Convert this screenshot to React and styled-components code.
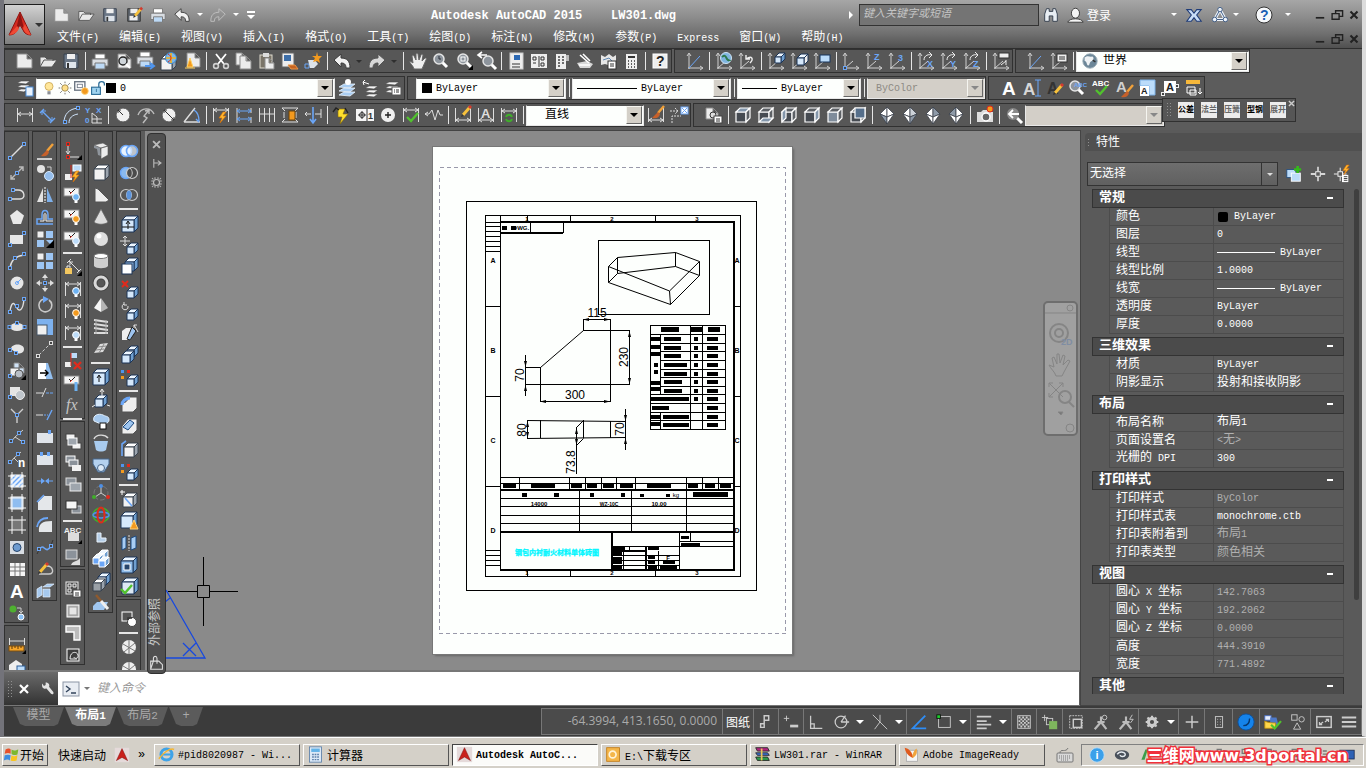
import React, { useState } from "react";
import styled, { createGlobalStyle, css } from "styled-components";

const GlobalStyle = createGlobalStyle`
  * {
    box-sizing: border-box;
  }
  body {
    margin: 0;
    background: #d4d0c8;
    font-family: "Liberation Mono", "Noto Sans CJK SC", monospace;
    font-size: 12px;
    color: #fff;
  }
  button, input, select {
    font: inherit;
    color: inherit;
    margin: 0;
    padding: 0;
    border: none;
    background: none;
    outline: none;
  }
`;

const LIGHT = "#dedede";
const BLUE = "#6ba6f7";
const PALE = "#bcdcfa";
const DARK = "#2a2f38";
const ORANGE = "#f39a1e";
const RED = "#e02a1c";
const GREEN = "#3fae2a";

// ---------- shapes that several icons share ----------
const Dot = ({ x, y, c = BLUE }) => (
  <rect x={x - 1.5} y={y - 1.5} width="3" height="3" stroke={c} fill="#444" />
);
const Rect = ({ x, y, w, h, f = "#eee", s = "none" }) => (
  <rect x={x} y={y} width={w} height={h} fill={f} stroke={s} />
);
const Sheet = ({ x = 3, y = 3, w = 13, h = 14, f = "#ececec" }) => (
  <path
    d={`M${x} ${y}h${w - 5}l5 5v${h - 5}h${-w}z M${x + w - 5} ${y}v5h5`}
    fill={f}
    stroke="#8b8b8b"
  />
);
const Cube = ({ x = 3, y = 3, s = 10, f = "#f2f2f2", side = "#9aa3ad", top = "#ffffff", e = "#39424e" }) => (
  <g stroke={e} strokeWidth="1" strokeLinejoin="round">
    <path d={`M${x} ${y + 4}l4 -4h${s}l-4 4z`} fill={top} />
    <path d={`M${x + s} ${y + 4}l4 -4v${s}l-4 4z`} fill={side} />
    <rect x={x} y={y + 4} width={s} height={s} fill={f} />
  </g>
);
const BlueCube = (p) => <Cube f="#d5e8fb" side="#6f9fd0" top="#eef7ff" e="#1c3557" {...p} />;
const Axes = () => (
  <path d="M4 18V3M2 5l2-3 2 3M3 17h14M15 15l3 2-3 2M4 17l8-7" stroke="#d0d0d0" />
);
const Dim = ({ y = 10 }) => (
  <path d={`M2.5 3V17M17.5 3V17M3 ${y}H17M6 ${y - 2}L3 ${y}l3 2M14 ${y - 2}l3 2-3 2`} stroke={LIGHT} />
);
const Letter = ({ x, y, size = 9, c = BLUE, family = "Liberation Sans", children }) => (
  <text x={x} y={y} fontSize={size} fontWeight="700" fontFamily={family} fill={c} stroke="none">
    {children}
  </text>
);
const Lens = ({ x = 8, y = 8 }) => (
  <g>
    <path d={`M${x + 3} ${y + 3}l5 5`} stroke="#fff" strokeWidth="3" />
    <circle cx={x} cy={y} r="5" fill="#8d949c" stroke="#e5e5e5" strokeWidth="1.5" />
  </g>
);
const Flash = ({ x = 10, y = 8 }) => (
  <path d={`M${x + 4} ${y}l-4 6h3l-2 5 6-7h-3l3-4z`} fill="#ffb62e" stroke="#d96b00" strokeWidth="0.6" />
);
const Printer = () => (
  <g stroke="#777">
    <path d="M5 3h10v5H5z" fill="#fff" />
    <path d="M2 8h16v7H2z" fill="#d9dde2" />
    <path d="M5 12h10v6H5z" fill="#bcd9f5" />
  </g>
);
const Brush = ({ x = 8, y = 3 }) => (
  <g>
    <path d={`M${x + 10} ${y}L${x + 4} ${y + 7}`} stroke="#f1a13a" strokeWidth="2.4" />
    <path d={`M${x + 4} ${y + 6}l-6 6c4 1 7 0 8-4z`} fill="#c6602a" />
  </g>
);
const Pencil = ({ x = 8, y = 2 }) => (
  <g>
    <path d={`M${x + 8} ${y}L${x + 1} ${y + 8}`} stroke="#f7c13c" strokeWidth="3" />
    <path d={`M${x + 9} ${y - 1}l-2 2`} stroke="#d23b2f" strokeWidth="3" />
    <path d={`M${x} ${y + 7}l-1 3 3-1z`} fill="#333" />
  </g>
);
const Bulb = ({ x = 13, y = 12, c = ORANGE }) => (
  <g>
    <path d={`M${x} ${y}v6`} stroke="#fff" strokeWidth="3" />
    <circle cx={x} cy={y} r="3.4" fill={c} stroke="#fff" strokeWidth="1" />
  </g>
);
const Cone = () => <path d="M3 17h10M5 16l3-9 3 9z" fill={ORANGE} stroke="#ffcf5e" />;
const Tick = ({ x = 5, y = 12 }) => (
  <path d={`M${x} ${y}l4 4 7-8`} stroke="#51c22e" strokeWidth="2.4" />
);
const Annot = ({ children }) => (
  <g>
    <Rect x={1} y={3} w={15} h={8} f="#f4f4f4" s="#888" />
    <path d="M6 6l2 2 4-4" stroke="#222" />
    <path d="M7 9l2-2" stroke={RED} />
    {children}
  </g>
);
const Diamond = ({ a = "#fff", b = "#ccd2d9", c = "#fff", d = "#8e9aa8" }) => (
  <g stroke="#3c434c" strokeWidth="0.8">
    <path d="M10 2L3 9l7 3z" fill={a} />
    <path d="M10 2l7 7-7 3z" fill={b} />
    <path d="M3 9l7 3v7z" fill={c} />
    <path d="M17 9l-7 3v7z" fill={d} />
  </g>
);
const ViewCube = ({ face }) => (
  <g stroke="#fff" strokeWidth="1.2">
    <path d="M3 7h10v10H3z" fill={face === "front" ? "#7f8c9b" : "#464b52"} />
    <path d="M3 7l4-4h10l-4 4z" fill={face === "top" ? "#8396ab" : "#5d6166"} />
    <path d="M13 7l4-4v10l-4 4z" fill={face === "right" ? "#8396ab" : "#5d6166"} />
    {face === "left" && <path d="M3 7l4-4v10l-4 4z" fill="#8396ab" />}
    {face === "bottom" && <path d="M3 17l4-4h10l-4 4z" fill="#8396ab" />}
    {face === "back" && <path d="M7 3h10v10H7z" fill="#566f8b" />}
  </g>
);

const icons = {
  // standard
  new: <Sheet x={2} w={15} />,
  open: <path d="M2 16V6h5l2 2h6v2M2 16l4-7h13l-5 7z" fill="#e9e9e9" stroke="#555" />,
  save: (
    <>
      <path d="M3 3h14v14H3z" fill="#6b7787" stroke="#39424f" />
      <Rect x={6} y={3} w={8} h={5} f="#f0f0f0" />
      <Rect x={5} y={11} w={10} h={6} f="#dfe5ec" />
      <path d="M7 12v5" stroke="#333" strokeWidth="2" />
    </>
  ),
  saveAs: (
    <>
      <path d="M3 3h14v14H3z" fill="#5d646d" stroke="#333" />
      <Rect x={6} y={3} w={8} h={5} />
      <Rect x={5} y={11} w={9} h={5} />
      <Pencil x={10} y={3} />
    </>
  ),
  plot: <Printer />,
  preview: (
    <>
      <Sheet x={5} />
      <circle cx="10" cy="10" r="4" fill="#cfd5da" stroke="#222" strokeWidth="1.4" />
      <path d="M13 13l4 4" stroke="#fff" strokeWidth="2" />
    </>
  ),
  plotArrow: (
    <>
      <g transform="translate(-1 -2)"><Printer /></g>
      <path d="M9 15h8M14 12l4 3-4 3" stroke="#4f95ee" strokeWidth="2" />
    </>
  ),
  web: (
    <>
      <Cube x={2} y={4} s={11} />
      <circle cx="12" cy="7" r="5.5" fill="#7db7e8" stroke="#3c86c8" />
      <path d="M12 2v10M7 7h10" stroke="#f3b21d" strokeWidth="1.6" />
      <path d="M9 3c4 2 4 6 0 8" stroke={RED} />
    </>
  ),
  sheetCone: <><Sheet x={5} y={2} /><Cone /></>,
  cut: (
    <>
      <path d="M5 3l8 10M15 3L7 13" stroke="#fff" strokeWidth="1.8" />
      <circle cx="5" cy="15" r="2.4" stroke="#cfcfcf" strokeWidth="1.6" />
      <circle cx="15" cy="15" r="2.4" stroke="#cfcfcf" strokeWidth="1.6" />
    </>
  ),
  copyDoc: <><Sheet x={2} y={2} w={11} h={12} /><Sheet x={6} y={5} w={11} h={13} /></>,
  paste: <><Rect x={3} y={4} w={12} h={13} f="#7a7468" s="#e0dccf" /><Rect x={6} y={2} w={6} h={4} f="#ddd" /><Sheet x={8} y={7} w={9} h={11} /></>,
  matchDoc: <><Rect x={2} y={2} w={12} h={14} s="#666" /><Rect x={4} y={4} w={7} h={6} f="#3e6fa9" /><path d="M8 14l7 0 3 4-7 0z" fill="#c8641f" stroke="#e99345" /></>,
  blockFlash: <><path d="M2 13h4v4H2z" stroke={BLUE} /><path d="M5 9h7l3 4-4 4H7z" fill="#dde3e9" /><path d="M14 1l1 4 4 0-3 3 1 4-3-2-4 1 2-4-3-2 4 0z" fill={ORANGE} /></>,
  undo: <path d="M2 9l7-6v4c6 0 9 3 9 10h-4c0-4-2-5-5-5v4z" fill="#f1f1f1" stroke="#3a3a3a" />,
  redo: <path d="M18 9l-7-6v4c-6 0-9 3-9 10h4c0-4 2-5 5-5v4z" fill="#d8d8d8" stroke="#555" />,
  redoDim: <path d="M18 9l-7-6v4c-6 0-9 3-9 10h4c0-4 2-5 5-5v4z" fill="none" stroke="#c2c2c2" />,
  pan: <path d="M6 18c-1-4-5-6-4-8l3 2-1-7c0-1 2-1 2 0l2 4V3c0-1 2-1 2 0l1 6 2-5c0-1 2-1 2 0l-1 6 3-3c1 0 2 0 1 2l-4 9z" fill="#efefef" stroke="#666" />,
  zoomRt: <><Lens /><path d="M8 5v3h2" stroke={DARK} /></>,
  zoomWin: <><Lens x={9} /><rect x="7" y="6" width="4" height="4" stroke="#fff" /><path d="M19 14v5h-5z" fill="#000" /></>,
  zoomPrev: <><Lens x={11} y={10} /><path d="M10 4H1M5 1L1 4l4 3" stroke="#fff" strokeWidth="1.6" /></>,
  props: <><Rect x={4} y={2} w={13} h={16} s="#ccc" /><Rect x={8} y={4} w={6} h={5} f="#2c69b4" /><path d="M6 13h8M6 16h8" stroke="#333" /></>,
  designCenter: <><Rect x={2} y={3} w={16} h={14} /><path d="M4 6h3v3H4zM4 12h3M10 5v11M12 6h3v3h-3zM12 12h3v3h-3z" stroke="#333" /></>,
  toolPal: <><Rect x={4} y={3} w={10} h={15} /><Rect x={14} y={4} w={3} h={6} f="#bbb" /><path d="M6 6h2M10 6h2M6 9h2M10 9h2M6 12h2M10 12h2M6 15h2" stroke="#444" strokeWidth="1.6" /></>,
  sheetSet: <><path d="M2 12l10-2 6 3-3 4H5z" fill="#d7d7d7" /><path d="M4 14h11M5 4l9 8M8 3l7 7" stroke="#fff" strokeWidth="1.6" /></>,
  markup: <><path d="M3 4l4 2 4-3 4 3 3-2v9l-4-2-4 3-3-1-4 1z" fill="#e6e6e6" /><path d="M5 9l6-2 4 4" stroke="#5f87b2" /><Rect x={10} y={10} w={8} h={8} f="#fff" s="#333" /><path d="M12 13h4M12 15h4" stroke="#333" /></>,
  calc: <><Rect x={5} y={3} w={11} h={15} /><path d="M7 6h7" stroke="#333" strokeWidth="2" /><path d="M7 10h1M10 10h1M13 10h1M7 13h1M10 13h1M13 13h1M7 16h1M10 16h1M13 16h1" stroke="#333" strokeWidth="1.6" /></>,
  help: <><Rect x={3} y={3} w={14} h={14} s="#fff" /><Letter x={6} y={15} size={14} c="#222">?</Letter></>,
  // ucs
  ucs: <><path d="M4 18V3M2 5l2-3 2 3M3 17h14M15 15l3 2-3 2" stroke="#d0d0d0" /><path d="M4 17L15 5" stroke={BLUE} /></>,
  ucsWorld: <><Axes /><circle cx="12" cy="7" r="5.5" fill="#7fb5df" stroke="#cfe4f5" /><path d="M8 6c3-3 4 0 5 2s3 1 3 2" stroke="#2c7a4c" strokeWidth="2" /></>,
  ucsPrev: <><Axes /><path d="M9 8c6-4 8 0 4 4M9 4v4h4" stroke="#eee" strokeWidth="1.4" /></>,
  ucsFace: <><Axes /><BlueCube x={9} y={2} s={6} /></>,
  ucsObj: <><Axes /><BlueCube x={8} y={3} s={7} side="#eee" /></>,
  ucsView: <><Axes /><Rect x={8} y={4} w={10} h={7} f={PALE} s="#17345c" /></>,
  ucsOrigin: <><Axes /><Dot x={4} y={17} /></>,
  ucsZ: <><Axes /><Letter x={10} y={9}>Z</Letter></>,
  ucs3: <><Axes /><Letter x={11} y={10}>3</Letter></>,
  ucsX: <><Axes /><path d="M8 9c0-5 5-6 8-5M13 1l3 3-3 3" stroke="#eee" /><Letter x={11} y={16}>X</Letter></>,
  ucsY: <><Axes /><path d="M8 9c0-5 5-6 8-5M13 1l3 3-3 3" stroke="#eee" /><Letter x={11} y={16}>Y</Letter></>,
  ucsZr: <><Axes /><path d="M8 9c0-5 5-6 8-5M13 1l3 3-3 3" stroke="#eee" /><Letter x={11} y={16}>Z</Letter></>,
  ucsApply: <><Axes /><Rect x={8} y={2} w={10} h={5} s="#333" /><path d="M10 14l5-4M15 14V9" stroke="#eee" /></>,
  ucsNamed: <><Axes /><Rect x={8} y={3} w={10} h={8} s="#333" /><path d="M10 6h6M10 8h6" stroke="#333" /></>,
  globe: <><circle cx="10" cy="10" r="8" fill="#6c8798" stroke="#9aabb5" /><path d="M4 6c4-3 6 0 8-1s3 4 0 5-2 5-4 5-1-5-4-5z" fill="#eef2f4" /><path d="M13 9l3 2" stroke="#333" strokeWidth="1.6" /></>,
  // layers
  layers: <><path d="M2 5l4-2h9l-4 3zM2 9l4-2h9l-4 3zM2 13l4-2h7l-4 3z" fill="#f3f3f3" stroke="#444" strokeWidth="0.6" /><Rect x={11} y={9} w={7} h={9} f="#eaf3fc" s="#4e8fd9" /></>,
  layerCur: <><path d="M2 9l5-3h11l-5 4zM2 13l5-3h11l-5 4zM2 17l5-3h11l-5 4z" fill="#a9cdf2" stroke="#e8f2fc" strokeWidth="0.8" /><circle cx="11" cy="4" r="3" fill="#fff" /></>,
  layerPrev: <><path d="M5 10l4-2h9l-4 3zM5 14l4-2h9l-4 3zM5 18l4-2h9l-4 3z" fill="#f3f3f3" stroke="#444" strokeWidth="0.6" /><path d="M9 6L3 4M3 4l2-2M3 4l1 3" stroke="#fff" /></>,
  layerState: <><path d="M2 6l4-2h10l-4 3zM2 10l4-2h10l-4 3zM2 14l4-2h7l-4 3z" fill="#f3f3f3" stroke="#444" strokeWidth="0.6" /><Rect x={9} y={9} w={9} h={8} f="#fff" s="#555" /><path d="M11 12h1M13 12h3M11 14h1M13 14h3" stroke="#333" /></>,
  bulb: <><path d="M10 14v4" stroke="#8c9096" strokeWidth="4" /><circle cx="10" cy="8" r="5" fill="#ffe79a" stroke="#c9a34c" /></>,
  sun: <><circle cx="10" cy="10" r="4" fill="#ffe08a" stroke="#8f7a42" /><path d="M10 2v2M10 16v2M2 10h2M16 10h2M4 4l2 2M14 14l2 2M16 4l-2 2M4 16l2-2" stroke="#555" /></>,
  vpFreeze: <><rect x="2" y="2" width="12" height="10" stroke="#6b7683" strokeWidth="1.6" fill="#fff" /><rect x="5" y="5" width="6" height="4" stroke="#6b7683" /><circle cx="14" cy="13" r="4" fill={ORANGE} stroke="#ffd37a" /></>,
  lock: <><rect x="2" y="9" width="11" height="9" fill="#9fd3ef" stroke="#2c6d97" strokeWidth="1.4" /><path d="M11 9V5c0-4 7-4 7 0v2" stroke="#2c6d97" strokeWidth="1.6" /><path d="M8 11v4" stroke="#2c6d97" /></>,
  // text
  mtext: <Letter x={3} y={17} size={19} c="#fff">A</Letter>,
  stext: <><Letter x={1} y={17} size={17} c="#d7d7d7">A</Letter><path d="M13 2h6M13 18h6M16 2v16" stroke={BLUE} /></>,
  etext: <><Letter x={2} y={16} size={16} c="#333">A</Letter><Pencil x={9} y={7} /></>,
  find: <><Lens x={7} y={8} /><Letter x={6} y={9} size={6}>ABC</Letter></>,
  spell: <><Letter x={1} y={8} size={8} c="#fff">ABC</Letter><Tick x={5} y={12} /></>,
  tstyle: <><Letter x={2} y={14} size={15} c="#d0d0d0">A</Letter><Brush x={9} y={7} /></>,
  tscale: <><path d="M3 2h15v15H12V8H3z" fill={PALE} stroke="#7fb2e6" /><Rect x={3} y={8} w={9} h={10} f="#fff" /><Letter x={4} y={16} c="#222">A</Letter></>,
  tjust: <><Rect x={4} y={3} w={12} h={12} f="#fff" /><Letter x={6} y={13} size={11} c="#222">A</Letter><Dot x={3} y={16} c="#eee" /><Dot x={17} y={8} c="#eee" /></>,
  tspace: <><Rect x={3} y={2} w={14} h={4} f="#f7b83a" /><path d="M4 11v-2h8v6H4zM7 12h6v5H7z" stroke="#fff" fill="#555" /><path d="M17 10v6M15 14l2 2 2-2" stroke="#fff" /></>,
  // dimension
  dLinear: <Dim y={9} />,
  dAligned: <><path d="M4 6l10 10M2 8l4-4M12 18l5-5" stroke={BLUE} strokeWidth="1.4" /><path d="M4 10V6h4M10 16h4v-4" stroke={BLUE} /></>,
  dArc: <><path d="M3 18C3 9 8 4 17 3M8 18c0-5 3-8 9-9" stroke="#cfe3fa" /><Dot x={17} y={3} /><Dot x={4} y={17} /></>,
  dOrd: <><Letter x={1} y={8} size={8}>Y</Letter><Letter x={12} y={8} size={8}>X</Letter><Letter x={1} y={18} size={8}>0</Letter><path d="M8 18V8l5 4v6M8 14h10M8 18h10" stroke={LIGHT} /></>,
  dRad: <><circle cx="10" cy="10" r="7" fill="#efefef" stroke="#555" /><path d="M10 10L5 5M5 8V5h3" stroke="#333" /></>,
  dJog: <><path d="M2 10C5 2 15 2 18 9M7 18l4-5-3-2 5-6M9 6l4-1v4" stroke="#bdbdbd" strokeWidth="1.4" /></>,
  dDia: <><circle cx="10" cy="10" r="7" fill="#efefef" stroke="#555" /><path d="M5 5l10 10M5 8V5h3M15 12v3h-3" stroke="#333" /></>,
  dAng: <><path d="M2 17L13 3M2 17h16" stroke={LIGHT} strokeWidth="1.4" /><path d="M12 5c3 2 5 6 5 11M14 14l3 3" stroke={BLUE} strokeWidth="1.4" /></>,
  dQuick: <><Dim y={5} /><Flash x={8} y={7} /></>,
  dBase: <><path d="M3 3v15M17 12v6M17 3v5" stroke={LIGHT} /><path d="M3 6h14M3 14h14M6 4L3 6l3 2M14 4l3 2-3 2M6 12l-3 2 3 2M14 12l3 2-3 2" stroke={BLUE} /></>,
  dCont: <path d="M2.5 3v14M7.5 3v14M12.5 3v14M17.5 3v14M2 9h16" stroke={LIGHT} />,
  dSpace: <><path d="M2 3h16M2 17h16M2 3l3 3M18 3l-3 3M2 17l3-3M18 17l-3-3M4 7v6M16 7v6" stroke={LIGHT} /><Rect x={9} y={6} w={6} h={9} f={ORANGE} s="#6b430a" /></>,
  dBreak: <><path d="M2 9h6M12 9h6M4 7L2 9l2 2M18 4v9" stroke={LIGHT} /><path d="M10 2v15M7 14l3 4 3-4" stroke={BLUE} strokeWidth="1.6" /></>,
  dTol: <><path d="M6 4h7l-2 5h5l-8 10 2-7H6z" fill="#ffe02e" stroke="#8a6a00" strokeWidth="0.6" /><path d="M1 7l3-4 3 2M13 3l3 5" stroke="#222" strokeWidth="1.4" /></>,
  dGtol: <><Rect x={1} y={4} w={18} h={12} f="#f5f5f5" /><path d="M12 4v12M7 6v8M3 10h8" stroke="#333" /><circle cx="7" cy="10" r="2.5" stroke="#333" /><Letter x={13} y={14} size={9} c="#333">1</Letter></>,
  dCenter: <><circle cx="10" cy="10" r="7" fill="#f0f0f0" /><path d="M10 7v6M7 10h6" stroke="#222" strokeWidth="1.4" /></>,
  dInspect: <><Dim y={5} /><Tick x={6} y={12} /></>,
  dJogLine: <path d="M1 9h4l3-4 3 10 3-10 2 5 3 0M4 7L1 9l3 2" stroke={LIGHT} />,
  dEdit: <><Dim y={15} /><Pencil x={9} y={2} /></>,
  dText: <><Dim y={15} /><Letter x={5} y={13} size={13} c="#ddd">A</Letter></>,
  dUpdate: <><Dim y={6} /><path d="M7 12c1-3 5-3 6 0M13 14c-1 3-5 3-6 0" stroke={GREEN} strokeWidth="2" /></>,
  dStyle: <><Dim y={15} /><Brush x={8} y={1} /></>,
  dReassoc: <><path d="M1 6h8M6 3l3 3-3 3M3 18v-7h9" stroke={LIGHT} strokeDasharray="2 1" /><Rect x={12} y={2} w={7} h={7} f="#fff" s={BLUE} /><path d="M13 3l5 5M18 3l-5 5" stroke={BLUE} /></>,
  // views
  viewMgr: <><Sheet x={2} y={3} w={12} h={11} /><circle cx="9" cy="10" r="3" stroke="#333" fill="#ddd" /><Rect x={10} y={11} w={8} h={7} f="#fff" s="#444" /><path d="M12 14h4M12 16h4" stroke="#333" /></>,
  vTop: <ViewCube face="top" />,
  vBottom: <ViewCube face="bottom" />,
  vLeft: <ViewCube face="left" />,
  vRight: <ViewCube face="right" />,
  vFront: <ViewCube face="front" />,
  vBack: <ViewCube face="back" />,
  isoSW: <Diamond b="#fff" c="#8e9aa8" d="#fff" />,
  isoSE: <Diamond />,
  isoNE: <Diamond b="#8e9aa8" d="#fff" />,
  isoNW: <Diamond a="#8e9aa8" b="#fff" d="#fff" />,
  camera: <><path d="M2 7h4l2-2h5l2 2h3v10H2z" fill="#dedede" /><circle cx="11" cy="12" r="4" fill="#666" stroke="#fff" strokeWidth="1.4" /><circle cx="15" cy="4" r="3" fill={ORANGE} stroke={RED} /></>,
  viewPrev: <><path d="M12 12l6 6" stroke="#fff" strokeWidth="3" /><circle cx="9" cy="9" r="6" fill="#8a8a8a" /><path d="M15 9H5M9 5L5 9l4 4" stroke="#fff" strokeWidth="1.8" /></>,
  // draw
  line: <><path d="M4 16L16 4" stroke={LIGHT} strokeWidth="1.4" /><Dot x={3} y={17} /><Dot x={17} y={3} /></>,
  xline: <><path d="M4 16L16 4M4 12v4h4M12 4h4v4" stroke="#bbb" strokeWidth="1.4" /><Dot x={10} y={10} /></>,
  pline: <><path d="M4 14h9c6 0 5-9-2-9H7" stroke={LIGHT} strokeWidth="1.4" /><Dot x={3} y={14} /><Dot x={6} y={5} /></>,
  polygon: <path d="M10 3l7 5.5-3 8.500H6L3 8.500z" fill="#e8e8e8" />,
  rectang: <><Rect x={3} y={6} w={13} h={9} f="#e6e6e6" /><Dot x={3} y={16} /><Dot x={17} y={4} /></>,
  arc: <><path d="M3 17C4 9 9 5 17 4" stroke={LIGHT} strokeWidth="1.4" /><Dot x={3} y={17} /><Dot x={8} y={7} /><Dot x={17} y={3} /></>,
  circle: <><circle cx="10" cy="10" r="6.5" fill="#e6e6e6" /><path d="M10 10l4-4" stroke={BLUE} /><circle cx="10" cy="10" r="1.5" stroke={BLUE} /></>,
  spline: <><path d="M3 16c2-12 5-7 7-3s6 3 7-9" stroke={LIGHT} strokeWidth="1.4" /><Dot x={3} y={17} /><Dot x={10} y={11} /><Dot x={17} y={4} /></>,
  ellipse: <><ellipse cx="10" cy="10" rx="7" ry="4" fill="#e6e6e6" /><Dot x={2.5} y={10} /><Dot x={17.5} y={10} /><Dot x={10} y={6} /></>,
  ellArc: <><path d="M4 10c0-6 13-6 13 0s-9 5-9 3z" fill="#e6e6e6" /><Dot x={3} y={11} /><Dot x={9} y={14} /></>,
  insert: <><Sheet x={7} y={2} w={10} h={10} f="#cfe2f6" /><Rect x={3} y={7} w={9} h={8} f="#f2f2f2" s="#555" /><circle cx="12" cy="13" r="4" fill="#b9bfc6" stroke="#555" /><Dot x={3} y={15} /><path d="M19 14v5h-5z" fill="#000" /></>,
  block: <><Rect x={3} y={4} w={10} h={9} f="#e4e4e4" /><circle cx="13" cy="12" r="4.5" fill="#bfc5cb" stroke="#eee" /><Dot x={3} y={14} /></>,
  point: <><path d="M4 4l6 6 6-6M10 10v8" stroke="#ccc" strokeWidth="1.4" /><Dot x={10} y={10} /></>,
  divide: <><path d="M3 16l5-6 8-7M8 10l8 5" stroke="#ccc" /><Dot x={4} y={14} /><Dot x={12} y={6} /><Dot x={16} y={15} /></>,
  measure: <><path d="M2 15l5-6 7-6M7 9l4 4" stroke="#ccc" /><Dot x={3} y={13} /><Dot x={11} y={5} /><Letter x={11} y={18} size={12} c="#fff" family="Liberation Mono">n</Letter></>,
  hatch: <><Rect x={4} y={4} w={12} h={12} f="#e9f1fb" s="#fff" /><path d="M4 9l5-5M4 14L14 4M7 16l9-9M12 16l4-4" stroke={BLUE} strokeWidth="1.4" /><path d="M5 1v18M15 1v18M1 5h18M1 15h18" stroke="#f5f5f5" /></>,
  gradient: <><Rect x={4} y={4} w={12} h={12} f="#8fbdf0" s="#fff" /><path d="M5 1v18M15 1v18M1 5h18M1 15h18" stroke="#f5f5f5" /></>,
  boundary: <><Rect x={5} y={5} w={10} h={10} f="#777" /><path d="M5 1v18M15 1v18M1 5h18M1 15h18" stroke="#f5f5f5" /></>,
  region: <><Rect x={3} y={4} w={14} h={13} f="#d9dee4" /><circle cx="10" cy="10.5" r="4" fill="#6d9bd0" stroke="#26456c" /></>,
  table: <><Rect x={3} y={4} w={15} h={13} f="#f5f5f5" /><path d="M3 8h15M3 12h15M8 4v13M13 4v13" stroke="#777" /></>,
  addSel: <><circle cx="6" cy="6" r="3.5" fill="#4eb030" /><circle cx="14" cy="14" r="3" fill="#8bc0f3" stroke="#fff" /><path d="M10 5h4v5M12 8l2 2 2-2" stroke="#ccc" /></>,
  dist: <><path d="M2.5 3v7M17.5 3v7M3 6h14" stroke={LIGHT} /><Rect x={2} y={11} w={15} h={5} f="#f5a52a" s="#7b4e10" /><path d="M5 11v3M8 11v2M11 11v3M14 11v2" stroke="#5a3708" /><path d="M19 15v4h-4z" fill="#000" /></>,
  area: <><path d="M2 8l7-5 6 4v10H2z" fill="#eee" /><Rect x={10} y={9} w={8} h={8} f={PALE} s="#2b5c97" /></>,
  // modify
  erase: <><Brush x={8} y={3} /><path d="M2 18h15" stroke="#fff" strokeWidth="1.4" /></>,
  copy: <><circle cx="6" cy="6" r="4" fill="#e4e4e4" /><circle cx="14" cy="13" r="4.5" fill="#94bdec" stroke="#d9ebfd" /><path d="M12 4h4v4" stroke="#ccc" /></>,
  mirror: <><path d="M8 3v14H2z" fill="#e2e2e2" /><path d="M12 3v14h6z" fill="#7eb0ea" /><path d="M10 2v16" stroke="#fff" strokeDasharray="2 1" /></>,
  offset: <><path d="M18 12h-5V8c0-6-6-6-6 0v4H2v5h16" stroke={BLUE} strokeWidth="1.5" /><path d="M18 14h-7V8c0-2-2-2-2 0v6H5" stroke="#f2f2f2" /></>,
  arrayF: <><Rect x={2} y={2} w={7} h={7} s="#555" /><Rect x={11} y={2} w={7} h={7} f="#9cc5f3" /><Rect x={2} y={11} w={7} h={7} f="#9cc5f3" /><path d="M11 11h7v7z" fill="#9cc5f3" /><path d="M19 11v8h-8z" fill="#000" /></>,
  array: <><Rect x={2} y={2} w={7} h={7} s="#555" /><Rect x={11} y={2} w={7} h={7} f="#9cc5f3" /><Rect x={2} y={11} w={7} h={7} f="#9cc5f3" /><Rect x={11} y={11} w={7} h={7} f="#9cc5f3" /></>,
  move: <><path d="M10 1l3 4H7zM10 19l3-4H7zM1 10l4-3v6zM19 10l-4-3v6z" fill="#ddd" /><path d="M10 5v2M10 13v2M5 10h2M13 10h2" stroke="#ddd" /><Dot x={10} y={10} /></>,
  rotate: <><path d="M9 4a6.5 6.5 0 1 0 5 1" stroke="#c9c9c9" strokeWidth="1.6" /><path d="M8 1l6 3-6 4z" fill={BLUE} /></>,
  scale: <><Rect x={2} y={2} w={16} h={16} f="#7db1ee" /><Rect x={2} y={8} w={10} h={10} f="#f0f0f0" s="#456" /></>,
  lengthen: <><path d="M4 16L16 4" stroke="#ccc" strokeDasharray="3 2" /><Dot x={3} y={17} c="#ddd" /><Dot x={16} y={4} c="#ddd" /></>,
  stretch: <><path d="M3 2h8v16H3z" fill="#fff" /><path d="M11 2h2l5 16h-7z" fill="#93bfef" /><path d="M5 12h8M10 9l3 3-3 3" stroke="#000" strokeWidth="1.4" /></>,
  trim: <><path d="M1 10h7M7 14l4-9" stroke={LIGHT} /><path d="M11 10h8" stroke={BLUE} strokeDasharray="3 1" /></>,
  extend: <><path d="M1 10h7" stroke={LIGHT} /><path d="M9 10h4" stroke={BLUE} strokeDasharray="2 1" /><path d="M12 15l5-10" stroke={BLUE} strokeWidth="1.4" /></>,
  breakAt: <><Rect x={2} y={6} w={16} h={10} f="#dfe4ea" /><Rect x={13} y={3} w={3} h={4} f={BLUE} /></>,
  brk: <><Rect x={2} y={6} w={16} h={10} f="#dfe4ea" /><Rect x={5} y={3} w={3} h={4} f={BLUE} /><Rect x={12} y={3} w={3} h={4} f={BLUE} /></>,
  join: <><path d="M2 10h6M12 10h6" stroke={BLUE} /><path d="M6 7l4 3-4 3zM14 7l-4 3 4 3z" fill={BLUE} /></>,
  chamfer: <><path d="M3 17V9l6-6h8v14z" fill="#e4e7ea" /><path d="M2 9l7-7" stroke={BLUE} strokeWidth="1.6" /></>,
  fillet: <><path d="M4 17c-1-8 3-11 13-11v11z" fill="#e4e7ea" /><path d="M2 12C3 6 7 3 13 3" stroke={BLUE} strokeWidth="1.8" /></>,
  blend: <><path d="M4 13c5-9 6 6 12-4" stroke={BLUE} strokeWidth="1.6" /><path d="M2 17l2-4M16 8l2-5" stroke="#333" /><Dot x={4} y={12} /><Dot x={16} y={9} /></>,
  explode: <><path d="M4 15h10c6 0 4-8-2-8" stroke="#ccc" strokeWidth="1.4" /><Pencil x={4} y={5} /></>,
  solidBox: <><path d="M2 8l5-3v9l-5 3zM8 8h7v8H8zM8 6l4-3h7l-4 3z" fill="#a6c9ee" stroke="#e5f1fd" strokeWidth="0.7" /></>,
  // parametric and order
  pCoord: <><path d="M5 3v10M3 10l2 3 2-3M6 16h10" stroke={LIGHT} /><Dot x={5} y={3} c={RED} /><Dot x={5} y={16} c={RED} /><path d="M19 14v5h-5z" fill="#000" /></>,
  pAuto: <><Rect x={2} y={11} w={7} h={6} f="#eee" /><Rect x={10} y={2} w={8} h={6} f={PALE} s="#fff" /><path d="M8 2v13" stroke={RED} /><Flash x={9} y={8} /></>,
  pShow: <Annot><Bulb c="#6db2f2" /></Annot>,
  pShowAll: <Annot><Bulb /></Annot>,
  pHide: <Annot><Bulb c={PALE} /></Annot>,
  pLockDim: <><path d="M6 4l10 10M4 6l4-4M14 16l4-4M7 8V5h3" stroke={LIGHT} /><Rect x={2} y={11} w={7} h={6} f="#f3c75f" /><path d="M4 11V9h3v2" stroke="#eee" /><path d="M19 14v5h-5z" fill="#000" /></>,
  pDim1: <><Dim y={5} /><Bulb c="#6db2f2" /></>,
  pDim2: <><Dim y={5} /><Bulb /></>,
  pDim3: <><Dim y={5} /><Bulb c={PALE} /></>,
  pDel: <><Rect x={8} y={2} w={6} h={5} f={PALE} /><Rect x={2} y={11} w={6} h={5} f="#eee" /><path d="M8 2v13" stroke={RED} /><path d="M11 11l7 7M18 11l-7 7" stroke={RED} strokeWidth="2.4" /></>,
  pSet: <Annot><path d="M13 9v9" stroke="#6db2f2" strokeWidth="3" /></Annot>,
  fx: <text x="3" y="15" fontSize="16" fontStyle="italic" fontFamily="Liberation Serif" fill="#c4c4c4" stroke="none">fx</text>,
  order1: <><Rect x={3} y={3} w={9} h={6} f="#f2f2f2" s="#444" /><Rect x={9} y={12} w={9} h={6} f="#f2f2f2" s="#444" /><Rect x={5} y={7} w={9} h={7} f="#9fa6ae" s="#fff" /></>,
  order2: <><Rect x={3} y={3} w={9} h={6} f="#8b929a" s="#fff" /><Rect x={6} y={7} w={9} h={6} f="#8b929a" s="#fff" /><Rect x={9} y={12} w={9} h={6} f="#f2f2f2" /></>,
  order3: <><Rect x={3} y={3} w={10} h={7} f="#8b929a" s="#ddd" /><Rect x={7} y={8} w={11} h={8} f="#9ea5ad" s="#eee" /></>,
  order4: <><Rect x={9} y={9} w={9} h={7} f="#8b929a" s="#ddd" /><Rect x={3} y={4} w={11} h={8} f="#f5f5f5" s="#333" /></>,
  orderText: <><Rect x={5} y={8} w={11} h={8} f="#ddd" /><Letter x={1} y={8} size={8} c="#eee">ABC</Letter><path d="M19 15v4h-4z" fill="#000" /></>,
  orderHatch: <><Rect x={3} y={3} w={11} h={9} f="#8b929a" s="#ddd" /><path d="M8 18c2-5 5-2 9-7v7z" fill="#ddd" /></>,
  vports: <><Rect x={3} y={3} w={12} h={12} f="#4f4f4f" s="#eee" /><path d="M5 5h3v3H5zM10 5h3v3h-3zM5 10h3v3H5z" stroke="#eee" /><Rect x={10} y={11} w={8} h={7} f="#fff" s="#444" /><path d="M12 14h4M12 16h4" stroke="#333" /></>,
  vp1: <><Rect x={4} y={4} w={12} h={12} f="#b5b5b5" s="#fff" /><Rect x={6} y={6} w={8} h={8} f="#e6e6e6" s="#999" /></>,
  vpPoly: <path d="M3 3h14v14h-6V9H3z" fill="#bcbcbc" stroke="#fff" strokeWidth="1.4" />,
  vpObj: <><Rect x={4} y={4} w={12} h={12} f="#3e3e3e" s="#fff" /><path d="M7 14c0-8 7-8 8-4s-4 4-4 2M7 14h7" stroke="#eee" /></>,
  // modelling
  polysolid: <><path d="M3 4l6 2 1 9-3-1-1-6-3-1z" fill="#8f959c" /><path d="M3 4l9-2 5 3-7 2zM10 7l7-2v9l-7 4z" fill="#ececec" stroke="#555" strokeWidth="0.6" /></>,
  box: <Cube x={3} y={2} s={11} />,
  wedge: <path d="M4 3l3 1 11 11-3 2H4z" fill="#eee" stroke="#555" />,
  cone: <path d="M10 2l7 13c-3 3-11 3-14 0z" fill="#ddd" stroke="#666" strokeWidth="0.8" />,
  sphere: <><circle cx="10" cy="10" r="7" fill="#dfdfdf" /><circle cx="8" cy="7" r="2.5" fill="#fff" /></>,
  cylinder: <><path d="M3 5v10c2 3 12 3 14 0V5z" fill="#cfcfcf" /><ellipse cx="10" cy="5" rx="7" ry="2.5" fill="#fff" stroke="#777" /></>,
  torus: <><circle cx="10" cy="10" r="6" stroke="#444" strokeWidth="5" /><circle cx="10" cy="10" r="6" stroke="#d9d9d9" strokeWidth="3" /></>,
  pyramid: <><path d="M10 3l7 10-7 4z" fill="#b5b5b5" /><path d="M10 3L3 13l7 4z" fill="#f5f5f5" /></>,
  helix: <><path d="M3 3l14 2M3 7l14 2M3 11l14 2M3 16h14" stroke="#ddd" strokeWidth="2.2" /><path d="M5 3v14M15 3v14" stroke="#aaa" /></>,
  planar: <><path d="M3 14l6-9 8-1-5 9z" fill="#dcdcdc" /><path d="M5 11l8-1M7 8l8-1M8 14l5-9" stroke="#888" /></>,
  pressPull: <><BlueCube x={2} y={2} s={12} /><path d="M8 15V9M6 11l2-3 2 3" stroke="#111" /></>,
  extrude: <><BlueCube x={4} y={6} s={8} /><path d="M11 7V1M9 3l2-3 2 3M1 18l3-2M16 16l3 1" stroke="#eee" /></>,
  sweep: <><path d="M3 10C1 4 8 2 12 4s6 1 6 5-6 4-8 4z" fill="#a5c8ed" stroke="#e2effc" /><Rect x={9} y={12} w={6} h={6} f="#fff" s="#111" /></>,
  revolve: <><path d="M3 8h14l-2 9c-3 2-7 2-10 0z" fill="#a9cbee" /><path d="M3 6c2-5 11-5 14-1" stroke="#ddd" strokeWidth="1.4" /></>,
  loft: <><path d="M2 4h16v5l-5 8H7L2 9z" fill="#b4d1ef" stroke="#47668b" /><circle cx="10" cy="13" r="3.5" fill="#dce9f6" stroke="#47668b" /></>,
  gizmo: <><path d="M10 10V3M10 10l-6 4M10 10l6 4" stroke="#ccc" /><circle cx="10" cy="10" r="7" stroke="#777" strokeDasharray="5 2" /><circle cx="10" cy="3" r="2" fill="#4d8fe6" /><circle cx="3" cy="14" r="2" fill={GREEN} /><circle cx="17" cy="14" r="2" fill={RED} /></>,
  gizmoRot: <><ellipse cx="10" cy="10" rx="8" ry="7" stroke={GREEN} strokeWidth="1.6" /><ellipse cx="10" cy="10" rx="8" ry="3" stroke="#4d8fe6" strokeWidth="1.6" /><ellipse cx="10" cy="10" rx="3.5" ry="7.5" stroke={RED} strokeWidth="2" /></>,
  align3d: <path d="M6 6h4v5h5v3l-2 1H6z" fill="#b6cfe8" stroke="#e9f2fb" />,
  array3d: <><BlueCube x={7} y={1} s={6} e="#fff" f={BLUE} /><BlueCube x={2} y={5} s={6} e="#fff" f={BLUE} /><BlueCube x={8} y={8} s={6} e="#fff" f={BLUE} /></>,
  interfere: <><BlueCube x={7} y={2} s={8} f="#eee" /><Cube x={2} y={8} s={8} f="#9aa0a6" /></>,
  slice: <><path d="M2 13l4-4h11l-4 8H2z" fill="#9fc6f0" /><path d="M5 2l6 7" stroke="#8f5a2e" strokeWidth="2.4" /><path d="M10 8l7 8" stroke="#eee" strokeWidth="3" /></>,
  // solid editing
  union: <><circle cx="7" cy="10" r="5.5" fill="#e8f2fd" stroke={BLUE} strokeWidth="1.6" /><circle cx="13" cy="10" r="5.5" fill="#e8f2fd" fillOpacity="0.7" stroke={BLUE} strokeWidth="1.6" /></>,
  subtract: <><circle cx="7" cy="10" r="5.5" fill="#8ab9ee" stroke={BLUE} strokeWidth="1.4" /><circle cx="13" cy="10" r="5.5" fill="#4b4b4b" stroke="#ccc" strokeWidth="1.2" /><path d="M11 5c3 3 3 7 0 10" stroke="#ccc" /></>,
  intersect: <><circle cx="7" cy="10" r="5.5" stroke="#ccc" strokeWidth="1.2" /><circle cx="13" cy="10" r="5.5" stroke="#ccc" strokeWidth="1.2" /><ellipse cx="10" cy="10" rx="2.6" ry="4.6" fill="#5c94dc" /></>,
  extFace: <><BlueCube x={3} y={3} s={12} /><path d="M9 16V9M7 11l2-3 2 3M3 14h12" stroke="#111" /></>,
  movFace: <><path d="M6 1v10M1 6h10M4 3l2-2 2 2M4 9l2 2 2-2" stroke="#ddd" /><BlueCube x={8} y={8} s={7} /></>,
  offFace: <><BlueCube x={6} y={1} s={9} f="#8db7e4" /><Rect x={3} y={7} w={10} h={10} f="#fff" s="#1c3557" /></>,
  delFace: <><path d="M3 2l6 6M9 2L3 8" stroke={RED} strokeWidth="2" /><BlueCube x={8} y={8} s={7} /></>,
  rotFace: <><path d="M5 3a3 3 0 1 0 4 2M5 1v3h3" stroke="#ddd" /><BlueCube x={8} y={8} s={7} /></>,
  taperFace: <><path d="M3 17V8l4-3h5v12z" fill="#eee" /><path d="M8 16l5-12 4 4-6 9z" fill="#9dc3ee" stroke="#222" /><path d="M19 9l-4-7M15 5V2h3" stroke="#ddd" /></>,
  copyFace: <><BlueCube x={8} y={1} s={7} /><BlueCube x={3} y={6} s={8} /></>,
  colFace: <><Rect x={2} y={3} w={3} h={3} f="#4e95ee" /><Rect x={8} y={3} w={3} h={3} f={RED} /><Rect x={2} y={9} w={3} h={3} f={ORANGE} /><BlueCube x={8} y={8} s={7} /></>,
  filletEdge: <><path d="M3 17V8c4 0 6-3 6-6h9v11l-4 4z" fill="#eee" stroke="#555" /><path d="M3 10c0-4 4-7 8-7" stroke={BLUE} strokeWidth="3" /></>,
  chamEdge: <><path d="M3 17V9l6-7h9v11l-4 4z" fill="#eee" stroke="#555" /><path d="M4 10l7-7 4 3-6 7z" fill="#9fc6f0" stroke="#1c4a80" /></>,
  copyEdge: <><Cube x={5} y={4} s={10} /><path d="M3 17V5l4-3" stroke={BLUE} strokeWidth="1.6" /></>,
  imprint: <><Cube x={4} y={4} s={10} /><path d="M6 9l7 8" stroke={BLUE} strokeWidth="1.6" /><path d="M3 1v5M1 3h5" stroke="#fff" /></>,
  clean: <><BlueCube x={2} y={1} s={12} /><path d="M11 18h8l-4-9z" fill={ORANGE} stroke="#ffd37a" /></>,
  separate: <><path d="M3 5l4-2v12l-4 2zM12 5l5-2v12l-5 2z" fill="#a8cdf3" stroke="#1c4a80" /><path d="M10 2v16" stroke="#ddd" strokeDasharray="2 1" /></>,
  shell: <><BlueCube x={2} y={2} s={12} f="#8fbbe8" /><path d="M5 9h6v6H5z" fill="#26456c" stroke="#fff" /></>,
  check: <><BlueCube x={3} y={1} s={12} f="#dde8f3" /><Tick x={2} y={12} /></>,
  vs1: <><Rect x={3} y={3} w={10} h={9} f="#555" s="#fff" /><circle cx="13" cy="13" r="4.5" fill="#fff" stroke="#444" /><path d="M9 11V9h4" stroke="#333" strokeWidth="1.5" /></>,
  vs2: <><circle cx="10" cy="10" r="7" fill="#eee" /><path d="M4 7l12 7M16 6L5 15M10 3v14" stroke="#777" /></>,
  // status bar
  snap: <path d="M8 16H4v-4h4zM8 13V3h5v5H8" stroke="#ccc" strokeWidth="1.6" />,
  infer: <><path d="M5 3v6M2 6h6" stroke="#ccc" /><path d="M9 13h9v3H9z" fill="#ccc" /></>,
  ortho: <path d="M4 3v14h13M4 12h4v5" stroke="#ccc" strokeWidth="1.4" />,
  polar: <><circle cx="10" cy="10" r="6.5" stroke="#ccc" strokeWidth="1.4" /><path d="M10 10h9M10 10l5-7" stroke="#ccc" strokeWidth="1.4" /></>,
  iso: <path d="M2 2l16 16M10 2v8M10 10l-6 8" stroke="#ccc" />,
  otrack: <path d="M17 3L3 17h15" stroke="#2f8df5" strokeWidth="2" />,
  osnap: <><rect x="4" y="4" width="13" height="12" stroke="#ccc" /><Rect x={2} y={2} w={4} h={4} f="#1bd12b" s="#111" /></>,
  lweight: <path d="M2 4h16M2 9h11M2 13h16M2 17h11" stroke="#ccc" strokeWidth="2" />,
  transp: <><rect x="3" y="3" width="14" height="14" fill="#555" stroke="#ccc" /><path d="M4 5h12M4 9h12M4 13h12" stroke="#ccc" strokeWidth="2" strokeDasharray="2 2" /><path d="M6 7h11M6 11h11M6 15h11" stroke="#ccc" strokeWidth="2" strokeDasharray="2 2" /></>,
  cycle: <><path d="M4 2v7M1 5h7" stroke="#ccc" /><rect x="6" y="6" width="7" height="7" stroke="#ccc" /><Rect x={9} y={9} w={9} h={9} f="#7eb55d" /></>,
  selFilter: <><rect x="3" y="3" width="14" height="14" stroke="#ccc" strokeDasharray="2 1" /><rect x="7" y="7" width="9" height="9" stroke="#ccc" strokeWidth="1.6" /></>,
  annoVis: <><path d="M3 18l7-8V4M6 10h8M10 10l6 8" stroke="#bbb" strokeWidth="2.4" /><circle cx="14" cy="5" r="2.5" stroke="#ccc" /></>,
  annoAuto: <><path d="M3 18l7-8V4M6 10h8M10 10l6 8" stroke="#bbb" strokeWidth="2.4" /><path d="M17 2l-3 5h4l-3 4" stroke="#ccc" /></>,
  gear: <><circle cx="10" cy="10" r="4" stroke="#ccc" strokeWidth="3.4" /><path d="M10 3v3M10 14v3M3 10h3M14 10h3M5 5l2 2M13 13l2 2M15 5l-2 2M5 15l2-2" stroke="#ccc" strokeWidth="2.4" /></>,
  plus: <path d="M10 3v14M3 10h14" stroke="#ccc" strokeWidth="1.6" />,
  units: <><rect x="6" y="4" width="8" height="12" stroke="#ccc" /><path d="M8 7h1M11 7h1M8 10h1M11 10h1M8 13h1M11 13h1" stroke="#ccc" /></>,
  hardware: <><circle cx="10" cy="10" r="9" fill="#1583ea" stroke="#0b4f9c" /><path d="M7 14c5 0 7-3 7-8" stroke="#07386f" strokeWidth="1.6" /></>,
  tracker: <><Rect x={2} y={3} w={7} h={5} f="#e8eefc" s="#456cc4" /><path d="M8 5h7l2 8H8z" fill="#4e79c8" /><path d="M2 9c3 2 9 2 12 2v6H2z" fill="#ffd74a" stroke="#b88a12" /><Tick x={9} y={13} /></>,
  isolate: <><rect x="3" y="2" width="6" height="6" stroke="#ccc" /><circle cx="14" cy="7" r="3" stroke="#ccc" /><path d="M9 11l4 7H5z" stroke="#ccc" /></>,
  fullscreen: <><rect x="2" y="4" width="16" height="12" stroke="#ccc" strokeWidth="1.6" /><path d="M5 13l4-3M5 10v3h3M15 7l-4 3M15 10V7h-3" stroke="#ccc" strokeWidth="1.4" /></>,
  burger: <path d="M2 5h16M2 10h16M2 15h16" stroke="#ccc" strokeWidth="2" />,
  // info centre
  binoculars: <path d="M3 17V9l2-6h3v3h4V3h3l2 6v8h-5v-6H8v6z" fill="#e9eef3" stroke="#2f3a49" />,
  user: <><path d="M2 18c1-5 16-5 17 0z" fill="#f5f5f5" stroke="#333" /><ellipse cx="10.5" cy="8" rx="4.5" ry="5.5" fill="#f5f5f5" stroke="#333" /></>,
  exchange: <path d="M2 4h5l3 4 3-4h5l-5 6 5 7h-5l-3-4-3 4H2l5-7z" fill="#c9ddf7" stroke="#1f3c78" strokeWidth="1.2" />,
  a360: <><path d="M10 4l6 11H4z" stroke="#eef4fb" strokeWidth="3.4" /><path d="M10 4l6 11H4z" stroke="#37557f" strokeWidth="1" /><circle cx="10" cy="4" r="2.5" fill="#eef4fb" stroke="#37557f" /><circle cx="16" cy="15" r="2.5" fill="#eef4fb" stroke="#37557f" /><circle cx="4" cy="15" r="2.5" fill="#eef4fb" stroke="#37557f" /></>,
  helpRound: <><circle cx="10" cy="10" r="8" fill="#f6f8fa" stroke="#333" /><Letter x={6} y={15} size={14} c="#1a5fb4">?</Letter></>,
  minimize: <path d="M4 14h12" stroke="#222" strokeWidth="2.4" />,
  restore: <path d="M8 8V4h10v8h-4M3 8h10v8H3z" stroke="#222" strokeWidth="2" />,
  close: <path d="M5 5l10 10M15 5L5 15" stroke="#222" strokeWidth="3" />,
  closeLight: <path d="M6 6l8 8M14 6l-8 8" stroke="currentColor" strokeWidth="2.2" />,
  pin: <path d="M6 5v11M6 10h8M11 7l4 3-4 3" stroke="#bbb" strokeWidth="1.4" />,
  wheel: <><circle cx="10" cy="10" r="4" stroke="#bbb" strokeWidth="1.6" /><path d="M8 3v3M12 3v3M8 14v3M12 14v3M3 8h3M3 12h3M14 8h3M14 12h3M4 4l2 2M16 4l-2 2M4 16l2-2M16 16l-2-2" stroke="#bbb" strokeWidth="1.4" /></>,
  clip: <path d="M3 18V9h3V6c0-3 4-3 4 0v6M6 9h6l4 4v5H3z" stroke="#ddd" strokeWidth="1.2" />,
  wrench: <path d="M5 4l2 3 2-1 0-3c4 0 5 3 4 5l5 6c1 2-1 4-3 2l-5-6c-4 1-6-2-5-6z" fill="#e3e3e3" />,
  prompt: <><rect x="2" y="3" width="16" height="14" fill="#e9edf3" stroke="#8b95a5" /><path d="M5 7l4 3-4 3M10 14h5" stroke="#33445c" strokeWidth="1.4" /></>,
  quickSel: <><Rect x={2} y={5} w={10} h={9} f={PALE} s="#274f7e" /><Rect x={7} y={9} w={10} h={9} f={PALE} s="#fff" /><path d="M14 1v8M10 5h8" stroke="#35b81d" strokeWidth="3" /></>,
  pick: <><path d="M10 2v5M10 13v5M2 10h5M13 10h5" stroke="#fff" strokeWidth="1.4" /><rect x="7.5" y="7.5" width="5" height="5" stroke="#fff" /></>,
  pickFlash: <><path d="M8 3v4M8 13v5M1 10h4M11 10h4" stroke="#fff" /><rect x="5.5" y="7.5" width="5" height="5" stroke="#fff" /><Flash x={11} y={0} /><Rect x={10} y={11} w={7} h={8} f="#fff" /><path d="M12 13h4M12 15h4M12 17h4" stroke="#333" /></>,
  // taskbar
  flag: <><path d="M3 4c3-2 5-1 6 0v5c-2-1-4-1-7 0z" fill="#e8502a" /><path d="M10 4c3 2 5 1 8 0l-1 6c-3 1-5 1-7-1z" fill="#7cb82f" /><path d="M2 11c3-1 5-1 7 0l-1 6c-2-2-4-1-7 0z" fill="#3c8ce0" /><path d="M10 11c2 2 5 1 7 0l-1 6c-3 1-5 1-7 0z" fill="#f8c51f" /></>,
  acad: <><Rect x={1} y={1} w={18} h={18} f="#e5dada" /><path d="M10 2l7 15-7-4-7 4z" fill="#c9201c" stroke="#7d0f0d" strokeWidth="0.6" /></>,
  ie: <><circle cx="10" cy="10" r="6.5" stroke="#3fa3e8" strokeWidth="3.5" /><path d="M5 10h11" stroke="#3fa3e8" strokeWidth="2.4" /><path d="M1 15C6 8 14 2 19 4" stroke="#f5b52e" strokeWidth="1.6" /></>,
  winCalc: <><Rect x={3} y={1} w={14} h={18} f="#dce9f7" s="#5c7fa8" /><Rect x={5} y={3} w={10} h={4} f="#62b3e8" /><path d="M6 10h2M9 10h2M12 10h2M6 13h2M9 13h2M12 13h2M6 16h2M9 16h2M12 16h2" stroke="#5c7fa8" strokeWidth="1.6" /></>,
  folder: <><Rect x={2} y={2} w={15} h={16} f="#f4b64a" s="#c27a14" /><circle cx="9" cy="10" r="4" stroke="#fff3d8" strokeWidth="2" /></>,
  rar: <><path d="M2 2h14l2 4H4z" fill="#b3267f" stroke="#222" /><path d="M2 8h14l2 3H4z" fill="#3a6fd0" stroke="#222" /><path d="M2 13h14l2 4H4z" fill="#2e9a4b" stroke="#222" /><path d="M9 3v14" stroke="#e9c75a" strokeWidth="2" /></>,
  feather: <><Rect x={4} y={5} w={13} h={13} f="#f5f5f5" s="#aaa" /><path d="M2 2c5 1 9 5 10 12C6 12 3 8 2 2z" fill="#e05a1c" /><path d="M11 14c0-5 2-9 5-11 1 5 0 9-5 11z" fill="#f0a43c" /></>,
  keyboard: <><rect x="2" y="8" width="16" height="9" rx="1" fill="#d8d8d8" stroke="#777" /><path d="M4 11h12M4 13h12M6 15h8" stroke="#777" strokeDasharray="1 1" /><path d="M5 8c0-5 6 0 8-5" stroke="#777" /></>,
  info: <><circle cx="10" cy="10" r="9" fill="#3ba0ea" stroke="#bfe0f8" /><Letter x={8} y={15} size={14} c="#fff">i</Letter></>,
  swirl: <><ellipse cx="10" cy="10" rx="9" ry="6" fill="#49505a" /><path d="M4 9c4-5 11-2 10 1s-7 2-6 0" stroke="#e6ebf0" strokeWidth="1.8" /></>,
  trayA: <><path d="M3 16L8 3h3L7 16z" fill="#3a9e4b" /><path d="M9 3l8 13h-5z" fill="#ef7d25" /></>,
  trayMisc: <path d="M4 3h5v5H4zM11 5h5M11 9h5M4 12h12M6 16h8" stroke="#777" strokeWidth="1.6" />,
  monitor: <><Rect x={1} y={4} w={18} height={11} h={11} f="#2f62b4" s="#1c2c52" /><path d="M7 18h7" stroke="#555" strokeWidth="2" /></>,
};

const Svg = styled.svg`
  display: block;
  flex: none;
  fill: none;
  stroke: none;
  overflow: visible;
`;

const Icon = ({ name, size = 20 }) => (
  <Svg width={size} height={size} viewBox="0 0 20 20" aria-hidden="true">
    {icons[name]}
  </Svg>
);

// Latin runs are set smaller so that one letter takes half a Chinese character
const Latin = styled.span`
  font-family: "Liberation Mono", monospace;
  font-size: ${({ $size }) => $size || 10}px;
  white-space: pre;
`;

const Mixed = ({ children, size }) =>
  children
    .split(/([\x20-\x7e]+)/)
    .filter(Boolean)
    .map((part, i) => (/[\x20-\x7e]/.test(part) ? <Latin key={i} $size={size}>{part}</Latin> : part));

// ---------- window ----------
const Window = styled.div`
  display: flex;
  flex-direction: column;
  height: 100vh;
  min-height: 600px;
  overflow: hidden;
`;

const Application = styled.main`
  flex: 1;
  min-height: 0;
  display: flex;
  flex-direction: column;
  background: #5c5c5c;
  border-left: 4px solid #73737a;
  border-right: 4px solid #dcdcdc;
  border-bottom: 1px solid #777;
`;

const Header = styled.header`
  display: flex;
  height: 49px;
  flex: none;
  background: linear-gradient(#a6a6a6 0, #8b8b8b 18px, #6f6f6f 34px, #505050 48px);
  border-bottom: 1px solid #2e2e2e;
`;

const AppButton = styled.button`
  width: 41px;
  height: 41px;
  margin-top: 4px;
  flex: none;
  display: flex;
  align-items: center;
  justify-content: center;
  gap: 2px;
  border: 1px solid #1d1d1d;
  background: linear-gradient(#d2d2d2, #7e7e7e);
`;

const HeaderRows = styled.div`
  flex: 1;
  min-width: 0;
`;

const HeaderRow = styled.div`
  display: flex;
  align-items: center;
  height: ${({ $height }) => $height}px;
`;

const QuickAccess = styled.div`
  display: flex;
  align-items: center;
  padding-left: 5px;
`;

const Title = styled.h1`
  flex: 1;
  margin: 0;
  padding: 2px 2px 0 0;
  text-align: center;
  font-size: 12px;
  font-weight: 700;
  white-space: pre;
  overflow: hidden;
`;

const Search = styled.input`
  width: 180px;
  height: 22px;
  padding: 0 3px 2px;
  margin-left: 5px;
  background: #747474;
  border: 1px solid #333;
  font-size: 11px;
  font-style: italic;
  &::placeholder {
    color: #c4c4c4;
    opacity: 1;
  }
`;

const IconButton = styled.button`
  width: ${({ $w }) => $w || 24}px;
  height: 22px;
  flex: none;
  display: flex;
  align-items: center;
  justify-content: center;
`;

const SignIn = styled.button`
  width: 84px;
  text-align: left;
  white-space: nowrap;
`;

const Caret = styled.span`
  width: 0;
  height: 0;
  flex: none;
  border: ${({ $size }) => $size || 4}px solid transparent;
  border-bottom: none;
  border-top-color: ${({ $color }) => $color || "#fff"};
`;

const HeaderGap = styled.span`
  width: 20px;
  flex: none;
`;

const MenuBar = styled.nav`
  display: flex;
  align-items: center;
  flex: 1;
  gap: 20px;
  padding-left: 12px;
  button {
    white-space: nowrap;
    line-height: 18px;
  }
`;

// ---------- toolbars ----------
const ToolbarRows = styled.div`
  position: relative;
  z-index: 1;
  flex: none;
  display: flex;
  flex-direction: column;
  gap: 3px;
  padding-bottom: 3px;
`;

const ToolbarRow = styled.div`
  display: flex;
  gap: 2px;
  height: 24px;
`;

const Bar = styled.div`
  display: flex;
  align-items: center;
  flex: none;
  border: 1px solid #313131;
  background: #575757;
  ${({ $vertical }) =>
    $vertical
      ? css`
          flex-direction: column;
          width: 25px;
          padding-top: 8px;
          > :last-child {
            margin-bottom: -2px;
          }
        `
      : css`
          padding-left: 8px;
        `}
`;

const Tool = styled.button`
  flex: none;
  display: flex;
  align-items: center;
  justify-content: center;
  width: ${({ $w }) => $w || 23}px;
  height: 22px;
`;

const Divider = styled.span`
  flex: none;
  background: #e6e6e6;
  ${({ $vertical }) =>
    $vertical
      ? css`
          width: 19px;
          height: 2px;
          margin: 2px 0;
        `
      : css`
          width: 1px;
          height: 18px;
          margin: 0 2px 0 3px;
        `}
`;

const Tools = ({ list, vertical }) =>
  list.split(" ").map((name, i) => {
    if (name === "|") return <Divider key={i} $vertical={vertical} />;
    if (name === "v") {
      return (
        <Tool key={i} $w={12} aria-label="more">
          <Caret $size={3} $color="#2f2f2f" />
        </Tool>
      );
    }
    return (
      <Tool key={i} aria-label={name}>
        <Icon name={name} />
      </Tool>
    );
  });

const Toolbar = ({ list, vertical }) => (
  <Bar $vertical={vertical}>
    <Tools list={list} vertical={vertical} />
  </Bar>
);

const ComboBox = styled.span`
  display: flex;
  align-items: center;
  flex: none;
  width: ${({ $w }) => $w}px;
  height: 21px;
  padding-left: ${({ $pad }) => $pad || 4}px;
  background: ${({ $off }) => ($off ? "#d3cfc8" : "#fdfffd")};
  color: ${({ $off }) => ($off ? "#8d8a84" : "#000")};
  border: 1px solid #e8e8e8;
  border-top-color: #555;
  select {
    flex: 1;
    min-width: 0;
    height: 17px;
    padding-left: 4px;
    appearance: none;
    opacity: 1;
    font-size: ${({ $size }) => $size || 10}px;
  }
`;

const ComboArrow = styled.span`
  display: flex;
  align-items: center;
  justify-content: center;
  width: 16px;
  height: 18px;
  margin-right: 1px;
  background: #d4d0c8;
  border: 1px solid #f5f5f0;
  border-right-color: #666;
  border-bottom-color: #666;
`;

const Swatch = styled.span`
  width: 10px;
  height: 10px;
  flex: none;
  display: inline-block;
  background: #000;
`;

const Stroke = styled.span`
  width: ${({ $w }) => $w}px;
  height: 1px;
  flex: none;
  display: inline-block;
  vertical-align: middle;
  background: currentColor;
`;

const Combo = ({ label, value, children, off, ...rest }) => (
  <ComboBox $off={off} {...rest}>
    {children}
    <select aria-label={label} disabled={off}>
      <option>{value}</option>
    </select>
    <ComboArrow>
      <Caret $color={off ? "#888" : "#000"} />
    </ComboArrow>
  </ComboBox>
);

const Floating = styled.div`
  position: absolute;
  left: 1158px;
  top: 49px;
  display: flex;
  align-items: center;
  gap: 7px;
  height: 24px;
  padding: 0 9px 0 3px;
  background: #565656;
  border: 1px solid #313131;
`;

const FloatingClose = styled.button`
  position: absolute;
  right: -3px;
  top: -2px;
  color: #ccc;
`;

const Grip = styled.span`
  width: ${({ $w }) => $w || 5}px;
  height: ${({ $h }) => $h || 16}px;
  flex: none;
  background-image: radial-gradient(#8f8f8f 1px, transparent 1px);
  background-size: 3px 3px;
`;

const StampButton = styled.button`
  width: 16px;
  height: 16px;
  background: #ececec;
  color: ${({ $strong }) => ($strong ? "#000" : "#666")};
  font-size: 8px;
  font-weight: 700;
  line-height: 14px;
  white-space: nowrap;
`;

// ---------- work area ----------
const Middle = styled.div`
  flex: 1;
  min-height: 0;
  display: flex;
`;

const Work = styled.div`
  flex: 1;
  min-width: 0;
  display: flex;
  flex-direction: column;
  border-top: 1px solid #444;
`;

const WorkRow = styled.div`
  flex: 1;
  min-height: 0;
  display: flex;
`;

const Columns = styled.div`
  display: flex;
  gap: 3px;
  width: 141px;
  flex: none;
  overflow: hidden;
`;

const Column = styled.div`
  display: flex;
  flex-direction: column;
  gap: 2px;
  overflow: hidden;
`;

const Canvas = styled.section`
  position: relative;
  flex: 1;
  min-width: 0;
  display: flex;
  align-items: center;
  justify-content: center;
  background: #8a8a8a;
`;

const Paper = styled.svg`
  display: block;
  background: #fdfffd;
  box-shadow: 0 0 0 1px #777, 2px 2px 2px #666;
`;

const Palette = styled.aside`
  position: absolute;
  z-index: 2;
  left: 2px;
  top: 2px;
  bottom: -4px;
  width: 19px;
  display: flex;
  flex-direction: column;
  align-items: center;
  gap: 1px;
  padding: 1px 0 2px;
  background: #505050;
  border: 1px solid #313131;
  border-radius: 4px;
  color: #bbb;
  button {
    height: 18px;
  }
`;

const PaletteName = styled.span`
  margin: auto 0 6px;
  writing-mode: vertical-rl;
  text-orientation: sideways;
  transform: rotate(180deg);
  color: #c8c8c8;
  line-height: 17px;
`;

const Cursor = styled.svg`
  position: absolute;
  left: 20px;
  bottom: 0;
  fill: none;
`;

const NavBar = styled.div`
  position: absolute;
  right: 2px;
  top: 170px;
  width: 35px;
  height: 135px;
  border: 2px solid #6e6e6e;
  border-radius: 5px;
  background: #a0a0a0;
`;

const CommandRow = styled.form`
  display: flex;
  flex: none;
  height: 36px;
  border-top: 2px solid #777;
  border-bottom: 1px solid #777;
`;

const CommandTools = styled.div`
  display: flex;
  align-items: center;
  width: 54px;
  padding-left: 3px;
  background: linear-gradient(#6a6a6a, #333);
`;

const CommandLine = styled.label`
  flex: 1;
  display: flex;
  align-items: center;
  gap: 3px;
  padding-left: 3px;
  margin-right: 1px;
  background: #fff;
  input {
    flex: 1;
    padding-left: 4px;
    color: #222;
    font-size: 12px;
    font-style: italic;
  }
  input::placeholder {
    color: #999;
    opacity: 1;
  }
`;

// ---------- properties ----------
const Properties = styled.aside`
  width: 282px;
  flex: none;
  display: flex;
  flex-direction: column;
  border-left: 1px solid #444;
  border-bottom: 1px solid #444;
  background: #5a5a5a;
`;

const PropertiesHead = styled.h2`
  display: flex;
  align-items: center;
  gap: 5px;
  height: 18px;
  margin: 3px 0 0 4px;
  padding: 2px 0 0 2px;
  font-size: 12px;
  font-weight: 400;
  line-height: 16px;
  background: #505050;
  border-radius: 4px 0 0 0;
`;

const Selection = styled.div`
  display: flex;
  align-items: center;
  margin: 11px 0 3px 6px;
`;

const SelectionBox = styled.span`
  display: flex;
  align-items: center;
  width: 191px;
  height: 24px;
  margin-right: 4px;
  border: 1px solid #333;
  background: linear-gradient(#6e6e6e, #606060);
  select {
    flex: 1;
    height: 22px;
    padding-left: 2px;
    appearance: none;
  }
  option {
    color: #000;
  }
`;

const SelectionArrow = styled.span`
  display: flex;
  align-items: center;
  justify-content: center;
  width: 16px;
  height: 22px;
  border-left: 1px solid #333;
`;

const PropertyScroll = styled.div`
  flex: 1;
  min-height: 0;
  display: flex;
  margin-bottom: 11px;
`;

const Groups = styled.div`
  width: 252px;
  margin-left: 11px;
  overflow: hidden;
`;

const ScrollThumb = styled.span`
  width: 5px;
  height: 411px;
  margin-left: 10px;
  border-radius: 3px;
  background: #3f3f3f;
`;

const GroupHead = styled.button`
  display: flex;
  justify-content: space-between;
  align-items: center;
  width: 100%;
  height: 19px;
  padding: 0 10px 2px 6px;
  border: 1px solid #333;
  background: #4b4b4b;
  font-size: 13px;
  font-weight: 700;
  line-height: 14px;
`;

const Minus = styled.span`
  width: 6px;
  height: 2px;
  background: #fff;
`;

const GroupTable = styled.table`
  width: 235px;
  margin: 0 0 3px 17px;
  border-spacing: 0;
  table-layout: fixed;
  th, td {
    height: 18px;
    padding: 0 0 0 6px;
    border: solid #4c4c4c;
    border-width: 0 0 1px 1px;
    line-height: 16px;
    text-align: left;
    font-weight: 400;
    white-space: nowrap;
  }
  th {
    width: 104px;
  }
  td {
    padding-left: 3px;
    border-right-width: 1px;
  }
`;

const Value = styled.span`
  display: flex;
  align-items: center;
  gap: ${({ $gap }) => $gap || 6}px;
  color: ${({ $dim }) => ($dim ? "#b0b0b0" : "#fff")};
`;

const BlackSwatch = styled(Swatch)`
  margin-left: 1px;
  border-radius: 2px;
`;

// ---------- bottom ----------
const BottomRow = styled.div`
  display: flex;
  flex: none;
  height: 30px;
  background: #3b3b3b;
`;

const LayoutTabs = styled.div`
  flex: 1;
  display: flex;
  gap: 1px;
  padding: 1px 0 0 9px;
`;

const LayoutTab = styled.button`
  width: ${({ $w }) => $w || 51}px;
  height: 19px;
  line-height: 17px;
  clip-path: polygon(0 0, 100% 0, calc(100% - 6px) 90%, calc(100% - 10px) 100%, 12px 100%, 7px 90%);
  background: ${({ $active }) => ($active ? "#7b7b7b" : "#5b5b5b")};
  color: ${({ $active }) => ($active ? "#fff" : "#aaa")};
  font-weight: ${({ $active }) => ($active ? 700 : 400)};
  white-space: nowrap;
`;

const StatusBar = styled.div`
  display: flex;
  height: 27px;
  margin-top: 2px;
  background: #4b4b4b;
  border-top: 1px solid #777;
  border-bottom: 1px solid #777;
`;

const Coordinates = styled.span`
  width: 182px;
  padding-right: 5px;
  border: solid #777;
  border-width: 0 1px;
  text-align: right;
  line-height: 24px;
  font-family: "Open Sans", sans-serif;
  font-size: 12px;
  color: #aaa;
`;

const StatusButton = styled.button`
  display: flex;
  align-items: center;
  justify-content: center;
  gap: 6px;
  width: ${({ $w }) => $w || 25}px;
  border-right: 1px solid ${({ $line }) => ($line ? "#777" : "transparent")};
  white-space: nowrap;
`;

// ---------- taskbar ----------
const Taskbar = styled.footer`
  display: flex;
  align-items: center;
  flex: none;
  height: 31px;
  padding: 4px 2px 1px;
  background: #d4d0c8;
  border-top: 1px solid #fff;
  color: #000;
`;

const raised = css`
  border: 1px solid #fff;
  border-right-color: #555;
  border-bottom-color: #555;
  background: #d4d0c8;
`;

const StartButton = styled.button`
  ${raised}
  display: flex;
  align-items: center;
  width: 46px;
  height: 22px;
  white-space: nowrap;
`;

const QuickLaunch = styled.div`
  display: flex;
  align-items: center;
  gap: 8px;
  width: 106px;
  padding-left: 10px;
  white-space: nowrap;
`;

const Tasks = styled.div`
  flex: 1;
  min-width: 0;
  display: flex;
  gap: 3px;
`;

const Task = styled.button`
  ${raised}
  display: flex;
  align-items: center;
  gap: 3px;
  flex: 0 1 146px;
  min-width: 0;
  height: 22px;
  padding-left: 3px;
  overflow: hidden;
  white-space: nowrap;
  ${({ $active }) =>
    $active &&
    css`
      background: #fbfbf9;
      border-color: #444 #fff #fff #444;
      font-weight: 700;
    `}
`;

const Tray = styled.div`
  position: relative;
  display: flex;
  align-items: center;
  width: 283px;
  height: 22px;
  padding-left: 2px;
  border: 1px solid #808080;
  border-right-color: #fff;
  border-bottom-color: #fff;
`;

const Watermark = styled.a`
  position: absolute;
  right: 15px;
  top: 1px;
  line-height: 20px;
  font-family: "DejaVu Sans", "Noto Sans CJK SC", sans-serif;
  font-size: 16px;
  font-weight: 700;
  text-decoration: none;
  white-space: nowrap;
  color: #fff;
  -webkit-text-stroke: 3px #f0303a;
  paint-order: stroke;
`;

const menus = [
  "文件(F)", "编辑(E)", "视图(V)", "插入(I)", "格式(O)", "工具(T)", "绘图(D)",
  "标注(N)", "修改(M)", "参数(P)", "Express", "窗口(W)", "帮助(H)",
];

const leftColumns = [
  [
    "line xline pline polygon rectang arc circle spline ellipse ellArc insert block point divide measure hatch gradient boundary region table mtext addSel",
    "dist area",
  ],
  [
    "erase copy mirror offset arrayF array move rotate scale lengthen stretch trim extend breakAt brk join chamfer fillet blend explode solidBox",
  ],
  [
    "pCoord pAuto pShow pShowAll pHide | pLockDim pDim1 pDim2 pDim3 | pDel pSet fx |",
    "order1 order2 order3 order4 | orderText orderHatch",
    "vports vp1 vpPoly vpObj",
  ],
  [
    "polysolid box wedge cone sphere cylinder torus pyramid helix planar | pressPull extrude sweep revolve loft | gizmo gizmoRot align3d array3d interfere slice",
  ],
  [
    "union subtract intersect | extFace movFace offFace delFace rotFace taperFace copyFace colFace | filletEdge chamEdge copyEdge colFace | imprint clean separate shell check",
    "vs1 | vs2 vs2",
  ],
];

const groups = [
  {
    name: "常规",
    rows: [
      ["颜色", "ByLayer", "swatch"],
      ["图层", "0"],
      ["线型", "ByLayer", "line"],
      ["线型比例", "1.0000"],
      ["线宽", "ByLayer", "line"],
      ["透明度", "ByLayer"],
      ["厚度", "0.0000"],
    ],
  },
  { name: "三维效果", rows: [["材质", "ByLayer"], ["阴影显示", "投射和接收阴影"]] },
  { name: "布局", rows: [["布局名称", "布局1"], ["页面设置名", "<无>", "dim"], ["光栅的 DPI", "300"]] },
  {
    name: "打印样式",
    rows: [
      ["打印样式", "ByColor", "dim"],
      ["打印样式表", "monochrome.ctb"],
      ["打印表附着到", "布局1", "dim"],
      ["打印表类型", "颜色相关", "dim"],
    ],
  },
  {
    name: "视图",
    rows: [
      ["圆心 X 坐标", "142.7063", "dim"],
      ["圆心 Y 坐标", "192.2062", "dim"],
      ["圆心 Z 坐标", "0.0000", "dim"],
      ["高度", "444.3910", "dim"],
      ["宽度", "771.4892", "dim"],
    ],
  },
  { name: "其他", rows: [] },
];

const status = [
  ["snap", 25, true], ["infer", 25, true], ["ortho", 25], ["polar", 39, false, true],
  ["iso", 39, true, true], ["otrack", 25], ["osnap", 39, true, true], ["lweight", 41, true, true],
  ["transp", 25, true], ["cycle", 26, true], ["selFilter", 26], ["annoVis", 25], ["annoAuto", 25, true],
  ["gear", 40, true, true], ["plus", 26, true], ["units", 28, true], ["hardware", 27, true],
  ["tracker", 25], ["isolate", 26, true], ["fullscreen", 26], ["burger", 25, true],
];

const tasks = [
  ["ie", "#pid8020987 - Wi..."],
  ["winCalc", "计算器"],
  ["acad", "Autodesk AutoC..."],
  ["folder", "E:\\下载专区"],
  ["rar", "LW301.rar - WinRAR"],
  ["feather", "Adobe ImageReady"],
];

// the table on the sheet: top of each row and the bar that stands for its text
const scheduleRows = [334, 343, 351, 360, 369, 377, 386, 394, 403, 412, 420];
const scheduleBars = [
  [664, 17], [664, 17], [664, 17], [664, 23], [664, 23], [664, 18], [664, 18],
  [650, 39], [652, 17], [663, 26], [663, 26],
];
const revisionColumns = [519, 569, 585, 601, 616, 635, 686, 702, 718];
const revisionBars = [[503, 13], [531, 24], [571, 11], [587, 10], [603, 11], [620, 13], [647, 24], [688, 10], [705, 10], [720, 11]];

const Drawing = () => (
  <Paper width="359" height="507" viewBox="433 147 359 507" role="img" aria-label="LW301">
    <g fill="none" stroke="#000" shapeRendering="crispEdges">
      <rect x="439.5" y="167.5" width="346" height="466" stroke="#99a" strokeDasharray="4 3" />
      <rect x="466.5" y="201.5" width="290" height="389" />
      <rect x="485.5" y="215.5" width="255" height="361" />
      <path d="M500.5 215v354" />
      <path d="M500 222h234v347.5h-234M500 489.5h234M500 532h234M612 532v38M500 233h63" strokeWidth="2" />
      <path d="M485 222.5h15M485 226.5h15M485 231.5h15M485 236.5h15M485 241.5h15M485 246.5h15M485 251.5h15M485 306.5h15M485 396.5h15M485 486.5h15M485 550.5h15M485 555.5h15M485 560.5h15M485 565.5h15" />
      <path d="M734 306.5h6M734 396.5h6M734 486.5h6M527.5 215v7M570.5 215v7M655.5 215v7M527.5 570v6M570.5 570v6M655.5 570v6" />
      <path d="M530.5 222v11M563.5 222v11" />
      <rect x="598.5" y="240.5" width="111" height="74" />
      <path d="M583.5 319v12M610.5 319v83M583 319.5h27M583 330.5h47M629.5 331v53M525 384.5h105M540.5 367v35M525 367.5h16M525.5 355v41M540 401.5h70" />
      <path d="M527.5 420v18M540.5 420v18M583.5 420v18M610.5 421v17M625.5 409v41M576.5 427v47" />
      <path d="M500 477.5h234M500 483.5h234M500 498.5h234M500 506.5h234M500 515.5h234M500 523.5h234M579.5 490v42M631.5 490v42M686.5 490v42" />
      {revisionColumns.map((x) => <path key={x} d={`M${x}.5 477v12`} />)}
      <rect x="650.5" y="325.5" width="75" height="104" />
      <path d="M690.5 325v104M702.5 325v104M660.5 334v60M660.5 412v17" />
      {scheduleRows.map((y) => <path key={y} d={`M${y > 334 && y < 394 ? 660 : 650} ${y}.5H725`} />)}
      <path d="M612 546.5h67M679.5 532v38M690.5 532v9M679 541.5h55M679 546.5h55M623.5 551v19M658.5 551v19M629.5 546v5M612 555.5h67M612 560.5h67M612 565.5h67" />
      <path d="M612 551h33M646 546v24" strokeWidth="2" />
    </g>
    <g fill="none" stroke="#000">
      <path d="M608.5 266.5l9-9 58-5 24 9-30 29.5zM608.5 282.5l9-9 58-7 24 9-29 29zM608.5 266.5v16M617.5 257.5v16M675.5 252.5v14M699.5 261.5v14M669.5 291l1 13.5" />
      <path d="M540.5 367.5l43-37M527 420.5l98 1M527 438.5l98-1M583.5 420.5l-7 7M576.5 445.5l7-7" />
    </g>
    <g fill="#000">
      <path d="M583 319.5l6-1.5v3zM610 319.5l-6-1.5v3zM540 401.5l6-1.5v3zM610 401.5l-6-1.5v3zM629.5 331l-1.5 6h3zM629.5 384l-1.5-6h3zM525.5 367l-1.5-6h3zM525.5 385l-1.5 6h3zM527.5 421l-1.5 6h3zM527.5 438l-1.5-6h3zM625.5 421l-1.5-6h3zM625.5 438l-1.5 6h3zM576.5 428l-1.5 6h3zM576.5 445l-1.5-6h3z" />
      <path d="M502 226h5v4h-5zM511 226h5v4h-5zM661 327h18v5h-18zM691 327h11v5h-11zM708 327h12v5h-12z" />
      {scheduleRows.map((y, i) => (
        <g key={y}>
          <rect x={scheduleBars[i][0]} y={y + 3} width={scheduleBars[i][1]} height="4" />
          {i < 8 && <rect x="694" y={y + 3} width="4" height="4" />}
          <rect x="707" y={y + 3} width="11" height="4" />
        </g>
      ))}
      <path d="M651 337h9v4h-9zM651 345h9v4h-9zM651 352h9v4h-9zM654 363h4v4h-4zM654 370h4v4h-4zM651 381h9v4h-9zM651 387h9v4h-9zM651 415h9v4h-9zM651 422h9v4h-9z" />
      {revisionBars.map(([x, w]) => <rect key={x} x={x} y="484" width={w} height="4" />)}
      <path d="M522 493h5v4h-5zM554 493h5v4h-5zM590 493h4v4h-4zM621 493h4v4h-4zM640 494h4v3h-4zM666 494h4v3h-4zM693 492h35v5h-35z" />
      <path d="M681 536h8v3h-8zM681 543h19v3h-19zM613 547h12v3h-12zM648 547h11v3h-11zM613 552h9v3h-9zM613 557h9v3h-9zM613 561h9v3h-9zM613 566h9v3h-9zM648 556h7v3h-7zM648 561h7v3h-7zM648 566h9v3h-9zM663 561h12v3h-12zM660 566h17v3h-17z" />
    </g>
    <g fontFamily="Liberation Sans Narrow, Liberation Sans, sans-serif" fontSize="12" textAnchor="middle" fill="#000">
      <text x="597" y="317">115</text>
      <text x="575" y="399">300</text>
      <text transform="translate(628 357) rotate(-90)">230</text>
      <text transform="translate(524 375) rotate(-90)">70</text>
      <text transform="translate(526 430) rotate(-90)">80</text>
      <text transform="translate(624 429) rotate(-90)">70</text>
      <text transform="translate(575 462) rotate(-90)">73.8</text>
    </g>
    <g fontFamily="Liberation Sans, sans-serif" fontSize="6" fontWeight="700" textAnchor="middle" fill="#000">
      <text x="521" y="230" fontSize="6">DWG.</text>
      <text x="539" y="506">14000</text>
      <text x="609" y="506" fontSize="5">WZ-10C</text>
      <text x="659" y="506">10.00</text>
      <text x="676" y="497" fontWeight="400">kg</text>
      <text x="668" y="560">F</text>
      {["A", "B", "C", "D"].map((c, i) => (
        <React.Fragment key={c}>
          <text x="493" y={263 + i * 90} fontSize="7">{c}</text>
          <text x="737" y={263 + i * 90} fontSize="7">{c}</text>
        </React.Fragment>
      ))}
      {["1", "2", "3"].map((c, i) => (
        <React.Fragment key={c}>
          <text x={527 + i * 85} y="221">{c}</text>
          <text x={527 + i * 85} y="575">{c}</text>
        </React.Fragment>
      ))}
    </g>
    <text x="515" y="555" fontSize="7" fontWeight="700" fontFamily="Noto Sans CJK SC, sans-serif" fill="#00f6ff" stroke="#00f6ff" strokeWidth="0.3">
      钢包内衬耐火材料单体砖图
    </text>
  </Paper>
);

const PropertyValue = ({ value, kind }) => (
  <Value $dim={kind === "dim"} $gap={kind === "line" ? 5 : 6}>
    {kind === "swatch" && <BlackSwatch />}
    {kind === "line" && <Stroke $w={58} />}
    <span><Mixed>{value}</Mixed></span>
  </Value>
);

const PropertyGroup = ({ name, rows }) => {
  const [open, setOpen] = useState(true);
  return (
    <>
      <GroupHead aria-expanded={open} onClick={() => setOpen(!open)}>
        {name}
        <Minus />
      </GroupHead>
      {open && rows.length > 0 && (
        <GroupTable>
          <tbody>
            {rows.map(([label, value, kind]) => (
              <tr key={label}>
                <th scope="row"><Mixed>{label}</Mixed></th>
                <td><PropertyValue value={value} kind={kind} /></td>
              </tr>
            ))}
          </tbody>
        </GroupTable>
      )}
    </>
  );
};

const WindowButtons = () =>
  ["minimize", "restore", "close"].map((name) => (
    <IconButton key={name} $w={17} aria-label={name}>
      <Icon name={name} size={14} />
    </IconButton>
  ));

const HeaderSection = () => (
  <Header>
    <AppButton aria-label="menu">
      <Svg width="26" height="28" viewBox="0 0 26 28">
        <path d="M13 1l11 23c-4 0-7-2-8-5l-3-5-3 5c-1 3-4 5-8 5z" fill="#d42a20" stroke="#8f1410" />
        <path d="M13 1l4 17-4-4-4 5z" fill="#8f1512" />
        <path d="M2 24l8-9 2 2c-1 4-5 7-10 7zM24 24l-6-11-2 4c1 4 4 7 8 7z" fill="#ef4a35" />
      </Svg>
      <Caret $color="#333" />
    </AppButton>
    <HeaderRows>
      <HeaderRow $height={29}>
        <QuickAccess>
          {["new", "open", "save", "saveAs", "plot", "undo"].map((name) => (
            <IconButton key={name} aria-label={name}><Icon name={name} size={18} /></IconButton>
          ))}
          <IconButton $w={12} aria-label="undo list"><Caret $size={3} /></IconButton>
          <IconButton aria-label="redo"><Icon name="redoDim" size={18} /></IconButton>
          <IconButton $w={12} aria-label="redo list"><Caret $size={3} /></IconButton>
          <IconButton $w={18} aria-label="customize">
            <Svg width="10" height="8"><path d="M1 1h8" stroke="#fff" strokeWidth="2" /><path d="M1 4h8l-4 4z" fill="#fff" /></Svg>
          </IconButton>
        </QuickAccess>
        <Title>{"Autodesk AutoCAD 2015    LW301.dwg"}</Title>
        <Svg width="5" height="8"><path d="M0 0l4 4-4 4z" fill="#fff" /></Svg>
        <Search type="search" aria-label="search" placeholder="键入关键字或短语" />
        <IconButton aria-label="find"><Icon name="binoculars" size={18} /></IconButton>
        <IconButton aria-label="user"><Icon name="user" size={18} /></IconButton>
        <SignIn>登录</SignIn>
        <Caret $size={3} />
        <IconButton $w={34} aria-label="exchange"><Icon name="exchange" size={18} /></IconButton>
        <IconButton $w={18} aria-label="a360"><Icon name="a360" size={18} /></IconButton>
        <IconButton $w={14} aria-label="a360 list"><Caret $size={3} /></IconButton>
        <IconButton $w={42} aria-label="help"><Icon name="helpRound" /></IconButton>
        <Caret $size={3} />
        <HeaderGap />
        <WindowButtons />
      </HeaderRow>
      <HeaderRow $height={19}>
        <MenuBar>
          {menus.map((m) => <button key={m}><Mixed>{m}</Mixed></button>)}
        </MenuBar>
        <WindowButtons />
      </HeaderRow>
    </HeaderRows>
  </Header>
);

const ToolbarSection = () => (
  <ToolbarRows>
    <ToolbarRow>
      <Toolbar list="new open save | plot preview plotArrow web sheetCone | cut copyDoc paste matchDoc blockFlash | undo v redo v | pan zoomRt zoomWin zoomPrev | props designCenter toolPal sheetSet markup calc | help" />
      <Toolbar list="ucs | ucsWorld ucsPrev | ucsFace ucsObj ucsView | ucsOrigin ucsZ ucs3 | ucsX ucsY ucsZr | ucsApply" />
      <Bar>
        <Tools list="ucs ucsNamed |" />
        <Combo label="UCS" value="世界" $w={173} $size={12}><Icon name="globe" size={18} /></Combo>
      </Bar>
    </ToolbarRow>
    <ToolbarRow>
      <Bar>
        <Tools list="layers" />
        <Combo label="layer" value="0" $w={299}>
          <Icon name="bulb" size={16} />
          <Icon name="sun" size={16} />
          <Icon name="vpFreeze" size={17} />
          <Icon name="lock" size={16} />
          <Swatch />
        </Combo>
        <Tools list="layerCur layerPrev layerState" />
      </Bar>
      <Bar>
        <Combo label="color" value="ByLayer" $w={150} $pad={5}><Swatch /></Combo>
        <Divider />
        <Combo label="linetype" value="ByLayer" $w={159}><Stroke $w={60} /></Combo>
        <Divider />
        <Combo label="lineweight" value="ByLayer" $w={124}><Stroke $w={35} /></Combo>
        <Divider />
        <Combo label="plot style" value="ByColor" $w={118} off />
      </Bar>
      <Toolbar list="mtext stext etext find spell tstyle tscale tjust tspace" />
    </ToolbarRow>
    <ToolbarRow>
      <Bar>
        <Tools list="dLinear dAligned dArc dOrd | dRad dJog dDia dAng | dQuick dBase dCont dSpace dBreak | dTol dGtol dCenter dInspect dJogLine | dEdit dText dUpdate |" />
        <Combo label="dimension style" value="直线" $w={118} $pad={14} $size={12} />
        <Tools list="dStyle dReassoc" />
      </Bar>
      <Bar>
        <Tools list="viewMgr | vTop vBottom vLeft vRight vFront vBack | isoSW isoSE isoNE isoNW | camera | viewPrev" />
        <Combo label="view" value="" $w={139} off />
      </Bar>
    </ToolbarRow>
    <Floating>
      <Grip />
      {["公差", "法兰", "压簧", "型钢", "展开"].map((name, i) => (
        <StampButton key={name} $strong={i === 0 || i === 3}>{name}</StampButton>
      ))}
      <FloatingClose aria-label="close"><Icon name="closeLight" size={13} /></FloatingClose>
    </Floating>
  </ToolbarRows>
);

const CanvasSection = () => (
  <Canvas>
    <Drawing />
    <Cursor width="80" height="120" viewBox="165 551 80 120">
      <path d="M166 591l39 68h-40M183 644l13 13M196 644l-13 13M165 603l5-4" stroke="#1648e0" strokeWidth="1.3" />
      <path d="M168 592.5h29M210 592.5h28M203.5 558v28M203.5 599v28M197.5 586.5h12v12h-12z" stroke="#000" />
    </Cursor>
    <Palette>
      <button aria-label="close"><Icon name="closeLight" size={17} /></button>
      <button aria-label="pin"><Icon name="pin" size={16} /></button>
      <button aria-label="settings"><Icon name="wheel" size={15} /></button>
      <PaletteName>外部参照</PaletteName>
      <Icon name="clip" size={18} />
    </Palette>
    <NavBar>
      <Svg width="31" height="131" viewBox="0 0 31 131">
        <g stroke="#858585">
          <path d="M0 10h31" />
          <circle cx="25" cy="5" r="3" />
          <circle cx="14" cy="30" r="9" strokeWidth="2" />
          <circle cx="14" cy="30" r="4" strokeWidth="2" />
          <path d="M11 73c-1-4-6-8-7-11l5 2-2-9 2-1 3 7V51h2l1 9 3-8 2 1-2 9 5-5 2 1-6 11-2 4z" />
          <path d="M4 80l14 14M18 80L4 94M4 84v-4h4M14 80h4v4M4 90v4h4" />
          <circle cx="20" cy="94" r="6" strokeWidth="2" />
          <path d="M24 99l5 5" strokeWidth="2" />
          <path d="M13 109h5l-2 3z" fill="#777" />
          <circle cx="25" cy="125" r="4" />
        </g>
        <text x="16" y="42" fontSize="9" fontFamily="Liberation Sans" fontWeight="700" fill="#7e8da3">2D</text>
      </Svg>
    </NavBar>
  </Canvas>
);

const PropertiesSection = () => (
  <Properties>
    <PropertiesHead><Grip $w={4} $h={10} />特性</PropertiesHead>
    <Selection>
      <SelectionBox>
        <select aria-label="selection"><option>无选择</option></select>
        <SelectionArrow><Caret $size={3} $color="#ddd" /></SelectionArrow>
      </SelectionBox>
      {["quickSel", "pick", "pickFlash"].map((name) => (
        <IconButton key={name} aria-label={name}><Icon name={name} size={18} /></IconButton>
      ))}
    </Selection>
    <PropertyScroll>
      <Groups>
        {groups.map((g) => <PropertyGroup key={g.name} {...g} />)}
      </Groups>
      <ScrollThumb />
    </PropertyScroll>
  </Properties>
);

const BottomSection = () => {
  const [active, setActive] = useState("布局1");
  return (
    <BottomRow>
      <LayoutTabs>
        {["模型", "布局1", "布局2"].map((t) => (
          <LayoutTab key={t} $active={t === active} onClick={() => setActive(t)}>
            <Mixed size={11}>{t}</Mixed>
          </LayoutTab>
        ))}
        <LayoutTab $w={34}>+</LayoutTab>
      </LayoutTabs>
      <StatusBar>
        <Coordinates>-64.3994, 413.1650, 0.0000</Coordinates>
        <StatusButton $w={31} $line>图纸</StatusButton>
        {status.map(([name, w, line, list]) => (
          <StatusButton key={name} $w={w} $line={line} aria-label={name}>
            <Icon name={name} size={18} />
            {list && <Caret />}
          </StatusButton>
        ))}
      </StatusBar>
    </BottomRow>
  );
};

const TaskbarSection = () => (
  <Taskbar>
    <StartButton><Icon name="flag" size={17} />开始</StartButton>
    <QuickLaunch>快速启动<Icon name="acad" size={16} /><span>»</span></QuickLaunch>
    <Tasks>
      {tasks.map(([icon, text]) => (
        <Task key={icon} $active={icon === "acad"}>
          <Icon name={icon} size={17} />
          <span><Mixed>{text}</Mixed></span>
        </Task>
      ))}
    </Tasks>
    <IconButton $w={32} aria-label="keyboard"><Icon name="keyboard" /></IconButton>
    <Tray>
      {["info", "swirl", "trayA", "trayMisc", "trayMisc", "trayMisc", "trayMisc", "trayMisc", "trayMisc", "trayMisc", "monitor"].map((name, i) => (
        <IconButton key={i} $w={25} aria-label={name}><Icon name={name} size={16} /></IconButton>
      ))}
      <Watermark href="#">三维网www.3dportal.cn</Watermark>
    </Tray>
  </Taskbar>
);

const App = () => (
  <Window>
    <GlobalStyle />
    <Application>
      <HeaderSection />
      <ToolbarSection />
      <Middle>
        <Work>
          <WorkRow>
            <Columns>
              {leftColumns.map((bars, i) => (
                <Column key={i}>
                  {bars.map((list) => <Toolbar key={list} list={list} vertical />)}
                </Column>
              ))}
            </Columns>
            <CanvasSection />
          </WorkRow>
          <CommandRow onSubmit={(e) => e.preventDefault()}>
            <CommandTools>
              <Grip $w={6} $h={18} />
              <IconButton $w={22} type="button" aria-label="close"><Icon name="closeLight" /></IconButton>
              <IconButton $w={22} type="button" aria-label="customize"><Icon name="wrench" size={17} /></IconButton>
            </CommandTools>
            <CommandLine>
              <Icon name="prompt" />
              <Caret $size={3} $color="#777" />
              <input aria-label="command" placeholder="键入命令" />
            </CommandLine>
          </CommandRow>
        </Work>
        <PropertiesSection />
      </Middle>
      <BottomSection />
    </Application>
    <TaskbarSection />
  </Window>
);

export default App;
